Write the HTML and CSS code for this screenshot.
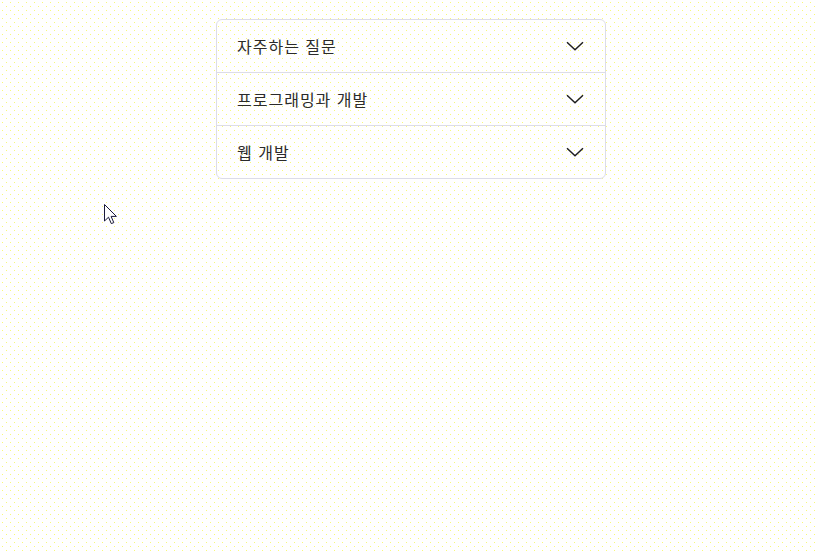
FILE: index.html
```html
<!DOCTYPE html>
<html lang="ko">
<head>
<meta charset="utf-8">
<title>FAQ</title>
<link rel="stylesheet" href="styles.css">
</head>
<body>
<div class="accordion">
  <div class="item">
    <button class="header" type="button">
      <span class="title">자주하는 질문</span>
      <svg class="chev" width="18" height="10" viewBox="0 0 18 10"><polyline points="1,1.2 9,8.8 17,1.2" fill="none" stroke="#1f1f1f" stroke-width="1.5"/></svg>
    </button>
  </div>
  <div class="item">
    <button class="header" type="button">
      <span class="title">프로그래밍과 개발</span>
      <svg class="chev" width="18" height="10" viewBox="0 0 18 10"><polyline points="1,1.2 9,8.8 17,1.2" fill="none" stroke="#1f1f1f" stroke-width="1.5"/></svg>
    </button>
  </div>
  <div class="item">
    <button class="header" type="button">
      <span class="title">웹 개발</span>
      <svg class="chev" width="18" height="10" viewBox="0 0 18 10"><polyline points="1,1.2 9,8.8 17,1.2" fill="none" stroke="#1f1f1f" stroke-width="1.5"/></svg>
    </button>
  </div>
</div>
<svg class="cursor" width="15" height="21" viewBox="0 0 15 21"><path d="M0.5,0.5 L0.5,17 L4.5,13.2 L7.3,19.6 L9.8,18.6 L7.1,12.4 L12.4,12.4 Z" fill="#fff" stroke="#1a1a3a" stroke-width="1"/></svg>
</body>
</html>
```
FILE: styles.css
```css
html, body {
  margin: 0;
  padding: 0;
}
body {
  width: 816px;
  height: 554px;
  overflow: hidden;
  position: relative;
  background-color: #ffffff;
  background-image:
    conic-gradient(from 270deg at 1px 1px, #f8f87a 0 90deg, transparent 90deg),
    conic-gradient(from 270deg at 1px 1px, #f8f87a 0 90deg, transparent 90deg);
  background-size: 8px 8px, 8px 8px;
  background-position: 2px 2px, 6px 6px;
  font-family: "Noto Sans CJK KR", "Noto Sans", sans-serif;
}
.accordion {
  margin: 19px 0 0 216px;
  width: 390px;
  box-sizing: border-box;
  border: 1px solid #dcdce8;
  border-radius: 6px;
  overflow: hidden;
}
.item + .item {
  border-top: 1px solid #dcdce8;
}
.header {
  display: flex;
  align-items: center;
  justify-content: space-between;
  width: 100%;
  height: 52px;
  padding: 0 21px 0 20px;
  border: 0;
  background: transparent;
  font: inherit;
  font-size: 16px;
  font-weight: 400;
  letter-spacing: 1px;
  color: #2b2b2b;
  text-align: left;
  box-sizing: border-box;
}
.title {
  line-height: 1;
}
.chev {
  display: block;
}
.cursor {
  position: absolute;
  left: 104px;
  top: 204px;
}
```
